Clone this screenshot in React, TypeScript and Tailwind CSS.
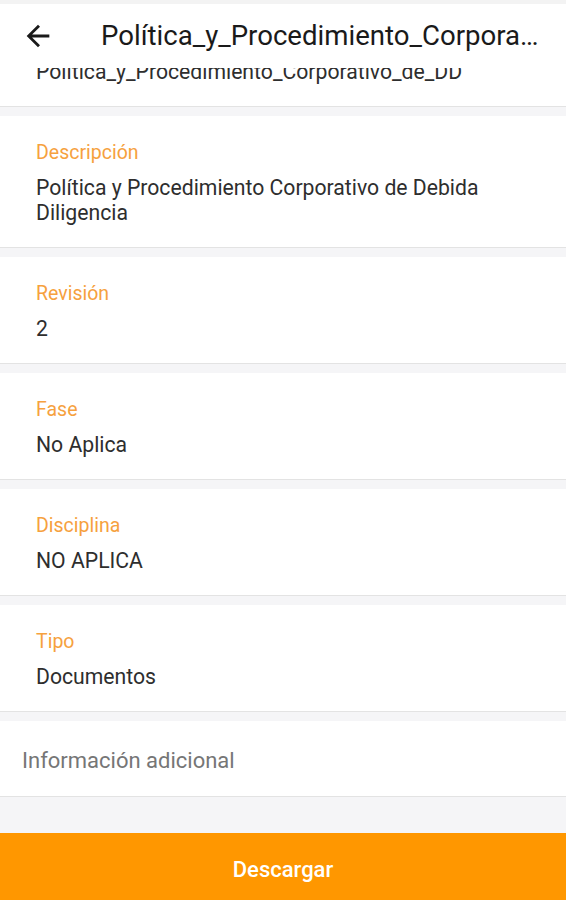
import React from "react";

const fields: { label: string; value: string }[] = [
  { label: "Nombre", value: "Política_y_Procedimiento_Corporativo_de_DD" },
  { label: "Descripción", value: "Política y Procedimiento Corporativo de Debida Diligencia" },
  { label: "Revisión", value: "2" },
  { label: "Fase", value: "No Aplica" },
  { label: "Disciplina", value: "NO APLICA" },
  { label: "Tipo", value: "Documentos" },
];

function Field({ label, value }: { label: string; value: string }) {
  return (
    <div className="bg-white border-b border-[#e3e3e3] mb-[9px] pl-9 pr-[60px] pt-[25px] pb-[22px]">
      <div className="text-[19.5px] leading-[24px] text-[#f6a13e]">{label}</div>
      <div className="mt-[10px] text-[21.2px] leading-[25px] text-[#2e2e2e]">{value}</div>
    </div>
  );
}

export default function App() {
  return (
    <div
      className="w-full h-[900px] flex flex-col bg-[#f5f5f7] overflow-hidden"
      style={{ fontFamily: "Roboto, 'Noto Sans', sans-serif" }}
    >
      <div className="h-[4px] bg-[#f3f3f3]" />
      <div className="relative z-10 h-[64px] bg-white flex items-center">
        <div className="w-[101px] pl-[21px] flex items-center">
          <svg width="34" height="34" viewBox="0 0 24 24" fill="#1a1a1a">
            <path d="M20 11H7.83l5.59-5.59L12 4l-8 8 8 8 1.41-1.41L7.83 13H20v-2z" />
          </svg>
        </div>
        <div className="flex-1 min-w-0 pr-[23px] text-[27.6px] text-[#1a1a1a] truncate">
          Política_y_Procedimiento_Corporativo_de_DD
        </div>
      </div>
      <div className="flex-1 overflow-hidden flex flex-col">
        <div className="-mt-[68px]">
          {fields.map((f) => (
            <Field key={f.label} label={f.label} value={f.value} />
          ))}
          <div className="bg-white border-b border-[#e3e3e3] h-[76px] pl-[22px] pt-[3px] flex items-center text-[22px] text-[#767676]">
            Información adicional
          </div>
        </div>
      </div>
      <button className="h-[67px] w-full pt-[6px] bg-[#ff9700] text-white text-[22px] font-medium flex items-center justify-center">
        Descargar
      </button>
    </div>
  );
}
